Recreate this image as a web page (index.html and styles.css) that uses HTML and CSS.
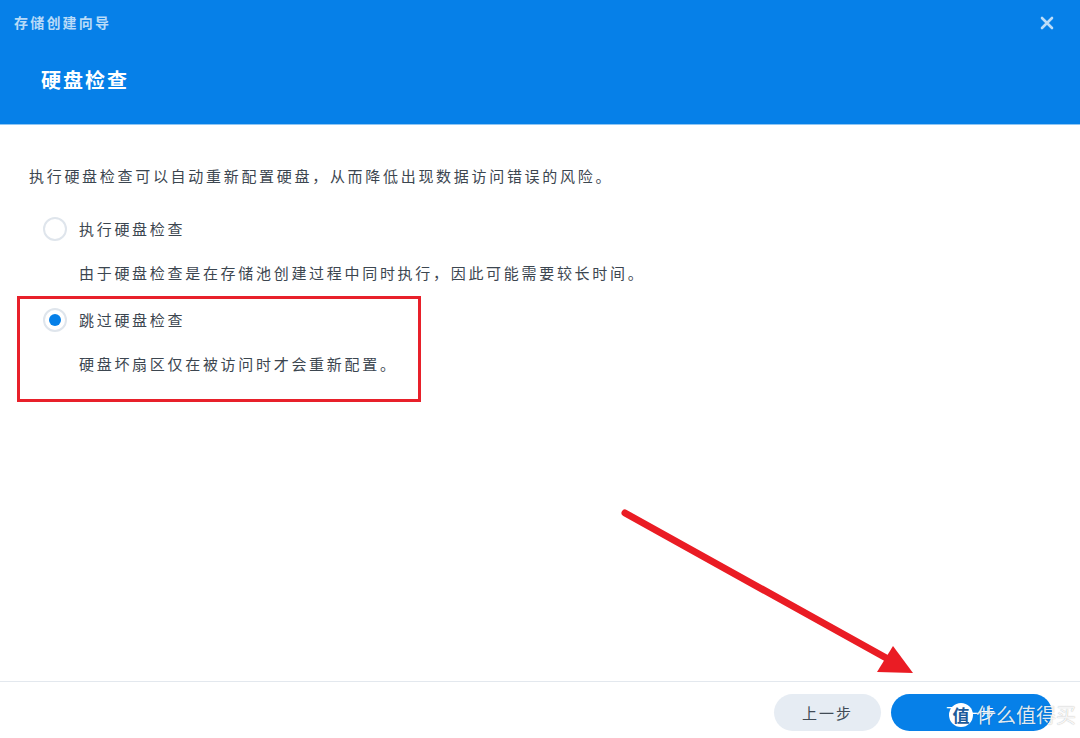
FILE: index.html
```html
<!DOCTYPE html>
<html lang="zh-CN">
<head>
    <meta charset="UTF-8">
    <meta name="viewport" content="width=device-width, initial-scale=1.0">
    <title>存储创建向导</title>
    <link rel="stylesheet" href="styles.css">
</head>
<body>
    <div class="dialog">
        <div class="header">
            <div class="top">
                <span class="wizard">存储创建向导</span>
                <svg class="close" width="14" height="14" viewBox="0 0 14 14">
                    <path d="M2 2 L12 12 M12 2 L2 12" stroke="#bcdcf8" stroke-width="2.6" stroke-linecap="round"/>
                </svg>
            </div>
            <h2 class="title">硬盘检查</h2>
        </div>

        <div class="content">
            <p class="intro">执行硬盘检查可以自动重新配置硬盘，从而降低出现数据访问错误的风险。</p>

            <div class="option">
                <span class="radio"></span>
                <span class="label">执行硬盘检查</span>
            </div>
            <p class="desc">由于硬盘检查是在存储池创建过程中同时执行，因此可能需要较长时间。</p>

            <div class="option second">
                <span class="radio checked"></span>
                <span class="label">跳过硬盘检查</span>
            </div>
            <p class="desc">硬盘坏扇区仅在被访问时才会重新配置。</p>
        </div>

        <div class="footer">
            <button class="btn prev">上一步</button>
            <button class="btn next">下一步</button>
        </div>

        <!-- 标注 -->
        <div class="mark-box"></div>
        <svg class="mark-arrow" width="1080" height="738" viewBox="0 0 1080 738">
            <line x1="625" y1="513" x2="888" y2="659" stroke="#ea1c24" stroke-width="7" stroke-linecap="round"/>
            <polygon points="913,673 877,672 893,646" fill="#ea1c24"/>
        </svg>
        <div class="watermark">
            <span class="wm-logo">值</span>
            <span class="wm-text">什么值得买</span>
        </div>
    </div>
</body>
</html>
```

FILE: styles.css
```css
* {
    margin: 0;
    box-sizing: border-box;
}

body {
    font-family: "Noto Sans CJK SC", "Noto Sans", sans-serif;
    background: #fff;
}

.dialog {
    position: relative;
    width: 1080px;
    height: 738px;
    display: flex;
    flex-direction: column;
    overflow: hidden;
}

.header {
    height: 125px;
    background-color: #0680e8;
    border-bottom: 1px solid #8fc6f4;
    padding: 11px 26px 0 14px;
}

.top {
    display: flex;
    justify-content: space-between;
    align-items: center;
    height: 22px;
}

.wizard {
    font-size: 14px;
    font-weight: 700;
    letter-spacing: 2.2px;
    color: rgba(255, 255, 255, 0.72);
}

.close {
    margin-top: 1px;
}

.title {
    margin: 34px 0 0 27px;
    font-size: 20px;
    font-weight: 700;
    letter-spacing: 2px;
    line-height: 26px;
    color: #fff;
}

.content {
    flex: 1;
    padding: 39px 29px 0;
    color: #3c4650;
    font-size: 15px;
    letter-spacing: 2.7px;
    line-height: 24px;
}

.option {
    display: flex;
    align-items: center;
    gap: 12px;
    margin: 29px 0 0 14px;
}

.option.second {
    margin-top: 23px;
}

.radio {
    width: 24px;
    height: 24px;
    border-radius: 50%;
    border: 2px solid #dfe5ec;
    display: flex;
    align-items: center;
    justify-content: center;
}

.radio.checked::after {
    content: "";
    width: 12px;
    height: 12px;
    border-radius: 50%;
    background: #0680e8;
}

.desc {
    margin: 20px 0 0 50px;
}

.footer {
    height: 57px;
    border-top: 1px solid #e3e8ee;
    display: flex;
    justify-content: flex-end;
    gap: 10px;
    padding: 12px 28px 0 0;
}

.btn {
    height: 37px;
    border: none;
    border-radius: 19px;
    font-family: inherit;
    font-size: 15px;
    letter-spacing: 2px;
}

.prev {
    width: 107px;
    background: #e6ecf3;
    color: #414b55;
}

.next {
    width: 161px;
    background: #0680e8;
    color: #fff;
}

.mark-box {
    position: absolute;
    left: 17px;
    top: 296px;
    width: 404px;
    height: 106px;
    border: 3px solid #e8202a;
}

.mark-arrow {
    position: absolute;
    left: 0;
    top: 0;
    pointer-events: none;
}

.watermark {
    position: absolute;
    left: 949px;
    top: 700px;
    display: flex;
    align-items: center;
    gap: 3px;
}

.wm-logo {
    width: 24px;
    height: 24px;
    border-radius: 50%;
    background: #fff;
    color: #1d5b9a;
    font-size: 17px;
    font-weight: 700;
    line-height: 24px;
    text-align: center;
}

.wm-text {
    font-size: 20px;
    color: rgba(255, 255, 255, 0.9);
    text-shadow: 0 0 1px rgba(0, 0, 0, 0.35);
    letter-spacing: 0;
}
```
